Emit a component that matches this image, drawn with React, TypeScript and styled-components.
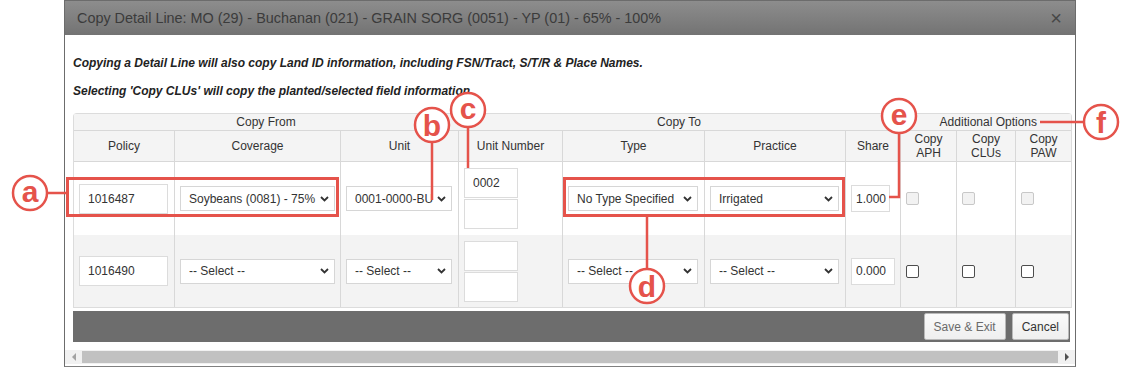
import React from 'react';
import styled, { createGlobalStyle } from 'styled-components';

const RED = '#e5534b';
const FONT = `'Liberation Sans', Arial, sans-serif`;

const GlobalStyle = createGlobalStyle`
  html, body {
    margin: 0;
    padding: 0;
    background: #fff;
  }
  body {
    font-family: ${FONT};
    color: #333;
  }
`;

const Page = styled.div`
  position: relative;
  width: 1132px;
  height: 367px;
  overflow: hidden;
  padding-left: 64px;
  box-sizing: border-box;
`;

const Dialog = styled.div`
  width: 1012px;
  height: 367px;
  box-sizing: border-box;
  border: 1px solid #6c6c6c;
  border-bottom-color: #808080;
  background: #fff;
  display: flex;
  flex-direction: column;
`;

const TitleBar = styled.div`
  flex: none;
  height: 34px;
  display: flex;
  align-items: center;
  justify-content: space-between;
  padding: 0 13px 0 12px;
  background: linear-gradient(#8d8d8d, #737373);
  color: #3b3b3b;
  font-size: 14.4px;
`;

const Close = styled.span`
  font-size: 20px;
  color: #474747;
  line-height: 1;
`;

const Body = styled.div`
  flex: 1;
  padding: 21px 0 0 8px;
`;

const Note = styled.p`
  margin: 0 0 14px;
  font-size: 12px;
  line-height: 14px;
  font-weight: bold;
  font-style: italic;
  color: #222;

  &:last-of-type {
    margin-bottom: 15px;
  }
`;

const Table = styled.table`
  width: 997px;
  table-layout: fixed;
  border-collapse: separate;
  border-spacing: 0;
  font-size: 12px;
  color: #333;
  border-left: 1px solid #dcdcdc;
  border-right: 1px solid #dcdcdc;
  border-bottom: 1px solid #dcdcdc;
  border-radius: 4px 4px 0 0;
  overflow: hidden;
`;

const GroupTh = styled.th<{ $align?: string }>`
  height: 16px;
  padding: 0 34px 0 0;
  font-weight: normal;
  text-align: ${(p) => p.$align ?? 'center'};
  background: #f4f4f4;
  border-top: 1px solid #dcdcdc;
  border-bottom: 1px solid #d8d8d8;
  line-height: 14px;
  &:first-child {
    padding: 0;
  }
  &:nth-child(2) {
    padding: 0;
  }
`;

const Th = styled.th`
  height: 30px;
  padding: 0;
  font-weight: normal;
  text-align: center;
  vertical-align: middle;
  line-height: 14px;
  background: #f4f4f4;
  border-bottom: 1px solid #d8d8d8;
  border-left: 1px solid #d8d8d8;
  &:first-child {
    border-left: none;
  }
`;

const Tr = styled.tr<{ $alt?: boolean }>`
  background: ${(p) => (p.$alt ? '#f3f3f3' : '#fff')};
`;

const Td = styled.td<{ $h: number }>`
  height: ${(p) => p.$h}px;
  padding: 0 0 0 5px;
  vertical-align: middle;
  border-left: 1px solid #d8d8d8;
  &:first-child {
    border-left: none;
  }
`;

const TextInput = styled.input<{ $w: number; $h?: number; $pad?: number }>`
  display: block;
  width: ${(p) => p.$w}px;
  height: ${(p) => p.$h ?? 30}px;
  box-sizing: border-box;
  margin: 0;
  border: 1px solid #dcdcdc;
  border-radius: 0;
  padding: 0 0 0 ${(p) => p.$pad ?? 8}px;
  font: 12px ${FONT};
  color: #333;
  background: #fff;
  outline: none;
`;

const Stack = styled.div`
  display: flex;
  flex-direction: column;
  gap: 1px;
`;

const SelectWrap = styled.span<{ $w: number }>`
  position: relative;
  display: block;
  width: ${(p) => p.$w}px;
`;

const NativeSelect = styled.select`
  appearance: none;
  display: block;
  width: 100%;
  height: 25px;
  box-sizing: border-box;
  margin: 0;
  border: 1px solid #d6d6d6;
  border-radius: 0;
  background: #fff;
  padding: 0 18px 0 8px;
  font: 12px ${FONT};
  color: #333;
  outline: none;
`;

const Chevron = styled.svg`
  position: absolute;
  right: 6px;
  top: 50%;
  margin-top: -3px;
  width: 9px;
  height: 6px;
  pointer-events: none;
`;

const Check = styled.input`
  appearance: none;
  display: block;
  width: 13px;
  height: 13px;
  margin: 0;
  box-sizing: border-box;
  border: 1px solid #4d4d4d;
  border-radius: 2px;
  background: #fff;

  &:disabled {
    border-color: #c8c8c8;
    background: #f2f2f2;
  }
`;

const Footer = styled.div`
  width: 997px;
  height: 31px;
  margin-top: 3px;
  box-sizing: border-box;
  background: #6d6d6d;
  display: flex;
  justify-content: flex-end;
  align-items: center;
  gap: 6px;
  padding-right: 1px;
`;

const Button = styled.button<{ $muted?: boolean }>`
  height: 27px;
  padding: 0 9px;
  border: 1px solid #b9b9b9;
  border-radius: 2px;
  background: linear-gradient(#fafafa, #efefef);
  font: 12px ${FONT};
  color: ${(p) => (p.$muted ? '#6a6a6a' : '#333')};
`;

const ScrollBar = styled.div`
  flex: none;
  height: 14px;
  margin-bottom: 2px;
  display: flex;
  align-items: stretch;
  background: #f1f1f1;
`;

const ScrollArrow = styled.div<{ $dir: 'left' | 'right' }>`
  width: 17px;
  display: flex;
  align-items: center;
  justify-content: center;
  &::before {
    content: '';
    border-top: 4px solid transparent;
    border-bottom: 4px solid transparent;
    ${(p) =>
      p.$dir === 'left'
        ? 'border-right: 4px solid #a3a3a3;'
        : 'border-left: 4px solid #505050;'}
  }
`;

const Thumb = styled.div`
  flex: 1;
  margin: 1px 0;
  background: #c1c1c1;
`;

const Overlay = styled.svg`
  position: absolute;
  left: 0;
  top: 0;
  pointer-events: none;
`;

const Select = ({ w, value }: { w: number; value: string }) => (
  <SelectWrap $w={w}>
    <NativeSelect defaultValue={value}>
      <option>{value}</option>
    </NativeSelect>
    <Chevron viewBox="0 0 9 6">
      <path d="M1 1 L4.5 4.5 L8 1" fill="none" stroke="#333" strokeWidth="1.8" />
    </Chevron>
  </SelectWrap>
);

type Row = {
  policy: string;
  coverage: string;
  unit: string;
  unitNumber: string;
  type: string;
  practice: string;
  share: string;
  shareW: number;
  h: number;
  alt?: boolean;
  locked?: boolean;
};

const rows: Row[] = [
  {
    policy: '1016487',
    coverage: 'Soybeans (0081) - 75%',
    unit: '0001-0000-BU',
    unitNumber: '0002',
    type: 'No Type Specified',
    practice: 'Irrigated',
    share: '1.000',
    shareW: 39,
    h: 73,
    locked: true,
  },
  {
    policy: '1016490',
    coverage: '-- Select --',
    unit: '-- Select --',
    unitNumber: '',
    type: '-- Select --',
    practice: '-- Select --',
    share: '0.000',
    shareW: 44,
    h: 72,
    alt: true,
  },
];

const badges = [
  { l: 'a', x: 30, y: 193, up: false },
  { l: 'b', x: 432, y: 125, up: true },
  { l: 'c', x: 468, y: 110, up: false },
  { l: 'd', x: 647, y: 286, up: true },
  { l: 'e', x: 899, y: 116, up: false },
  { l: 'f', x: 1101, y: 122, up: true },
];

const Annotations = () => (
  <Overlay width="1132" height="367" viewBox="0 0 1132 367">
    <g fill="none" stroke={RED}>
      <rect x="67.5" y="178.5" width="270" height="37" strokeWidth="3" />
      <rect x="564.5" y="178.5" width="279" height="37" strokeWidth="3" />
      <g strokeWidth="2.5">
        <path d="M47 193 H66" />
        <path d="M432 142 V200" />
        <path d="M468 127 V168" />
        <path d="M647 217 V269" />
        <path d="M899 133 V197 H889" />
        <path d="M1040 122 H1084" />
      </g>
    </g>
    {badges.map(({ l, x, y, up }) => (
      <g key={l}>
        <circle cx={x} cy={y} r="17" fill="#fff" stroke={RED} strokeWidth="2.5" />
        <text
          x={x}
          y={y + (up ? 10.5 : 9)}
          textAnchor="middle"
          fill={RED}
          fontFamily={FONT}
          fontWeight="bold"
          fontSize="30"
        >
          {l}
        </text>
      </g>
    ))}
  </Overlay>
);

const App = () => {
  return (
    <>
      <GlobalStyle />
      <Page>
        <Dialog>
          <TitleBar>
            <span>Copy Detail Line: MO (29) - Buchanan (021) - GRAIN SORG (0051) - YP (01) - 65% - 100%</span>
            <Close>×</Close>
          </TitleBar>
          <Body>
            <Note>
              Copying a Detail Line will also copy Land ID information, including FSN/Tract, S/T/R &amp; Place Names.
            </Note>
            <Note>Selecting 'Copy CLUs' will copy the planted/selected field information.</Note>
            <Table>
              <colgroup>
                <col style={{ width: 100 }} />
                <col style={{ width: 166 }} />
                <col style={{ width: 118 }} />
                <col style={{ width: 104 }} />
                <col style={{ width: 142 }} />
                <col style={{ width: 141 }} />
                <col style={{ width: 55 }} />
                <col style={{ width: 56 }} />
                <col style={{ width: 59 }} />
                <col style={{ width: 56 }} />
              </colgroup>
              <thead>
                <tr>
                  <GroupTh colSpan={3}>Copy From</GroupTh>
                  <GroupTh colSpan={4}>Copy To</GroupTh>
                  <GroupTh colSpan={3} $align="right">
                    Additional Options
                  </GroupTh>
                </tr>
                <tr>
                  <Th>Policy</Th>
                  <Th>Coverage</Th>
                  <Th>Unit</Th>
                  <Th>Unit Number</Th>
                  <Th>Type</Th>
                  <Th>Practice</Th>
                  <Th>Share</Th>
                  <Th>
                    Copy
                    <br />
                    APH
                  </Th>
                  <Th>
                    Copy
                    <br />
                    CLUs
                  </Th>
                  <Th>
                    Copy
                    <br />
                    PAW
                  </Th>
                </tr>
              </thead>
              <tbody>
                {rows.map((r) => (
                  <Tr key={r.policy} $alt={r.alt}>
                    <Td $h={r.h}>
                      <TextInput $w={89} defaultValue={r.policy} />
                    </Td>
                    <Td $h={r.h}>
                      <Select w={155} value={r.coverage} />
                    </Td>
                    <Td $h={r.h}>
                      <Select w={106} value={r.unit} />
                    </Td>
                    <Td $h={r.h}>
                      <Stack>
                        <TextInput $w={54} defaultValue={r.unitNumber} />
                        <TextInput $w={54} defaultValue="" />
                      </Stack>
                    </Td>
                    <Td $h={r.h}>
                      <Select w={130} value={r.type} />
                    </Td>
                    <Td $h={r.h}>
                      <Select w={129} value={r.practice} />
                    </Td>
                    <Td $h={r.h}>
                      <TextInput $w={r.shareW} $h={27} $pad={4} defaultValue={r.share} />
                    </Td>
                    <Td $h={r.h}>
                      <Check type="checkbox" disabled={r.locked} />
                    </Td>
                    <Td $h={r.h}>
                      <Check type="checkbox" disabled={r.locked} />
                    </Td>
                    <Td $h={r.h}>
                      <Check type="checkbox" disabled={r.locked} />
                    </Td>
                  </Tr>
                ))}
              </tbody>
            </Table>
            <Footer>
              <Button $muted>Save &amp; Exit</Button>
              <Button>Cancel</Button>
            </Footer>
          </Body>
          <ScrollBar>
            <ScrollArrow $dir="left" />
            <Thumb />
            <ScrollArrow $dir="right" />
          </ScrollBar>
        </Dialog>
        <Annotations />
      </Page>
    </>
  );
};

export default App;
